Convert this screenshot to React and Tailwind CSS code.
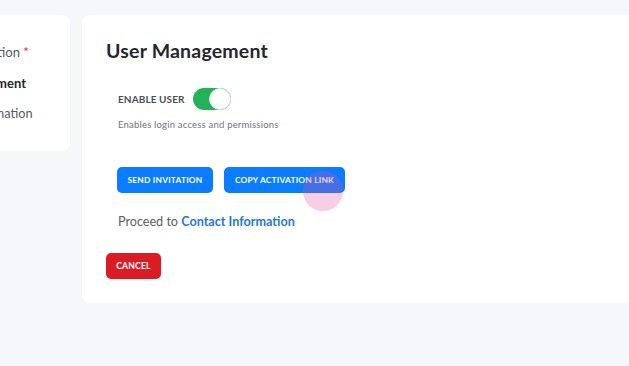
import React from "react";

export default function App() {
  const font = { fontFamily: "Lato, 'Noto Sans', sans-serif" };
  return (
    <div className="relative w-[629px] h-[366px] overflow-hidden bg-[#f6f7fb]" style={font}>
      <div className="flex items-start gap-3 pt-[15px]">
        <div className="shrink-0 ml-[-100px] w-[170px] h-[136px] bg-white rounded-lg pt-[28px] pl-[20px]">
          <div className="text-[13px] leading-[18px] text-[#55585f]">
            Basic Information <span className="text-[#e0323c]">*</span>
          </div>
          <div className="mt-[13px] text-[13px] leading-[18px] font-bold text-[#25262b]">User Management</div>
          <div className="mt-[12px] text-[12.7px] leading-[18px] text-[#55585f]">Contact Information</div>
        </div>
        <div className="shrink-0 w-[600px] h-[288px] bg-white rounded-lg pt-6 pl-6">
          <h2 className="text-[19.5px] leading-[24px] font-bold text-[#25262f] tracking-[0.2px]">User Management</h2>
          <div className="mt-[25px] ml-3 flex items-center gap-3 h-[22px]">
            <span className="w-[63px] whitespace-nowrap text-[10px] font-bold text-[#4a4d57] tracking-[0.1px]">ENABLE USER</span>
            <div className="relative w-[38px] h-[22px] rounded-full bg-[#23b159]">
              <div className="absolute right-0 top-0 w-[22px] h-[22px] rounded-full bg-white border border-[#e3e4e8]" />
            </div>
          </div>
          <p className="mt-2 ml-3 text-[9.5px] leading-[14px] text-[#6f727c] tracking-[0.2px]">Enables login access and permissions</p>
          <div className="mt-[35px] ml-[11px] flex gap-[11px]">
            <button className="w-[96px] h-[26px] rounded-[5px] bg-[#0a7cff] text-white text-[8.4px] font-bold tracking-[0.2px]">SEND INVITATION</button>
            <button className="w-[121px] h-[26px] rounded-[5px] bg-[#0a7cff] text-white text-[8.4px] font-bold tracking-[0.2px]">COPY ACTIVATION LINK</button>
          </div>
          <p className="mt-5 ml-3 text-[12.6px] leading-[18px] text-[#5a5d66]">
            Proceed to <span className="font-bold text-[#1f77d9]">Contact Information</span>
          </p>
          <button className="mt-[22px] w-[55px] h-[26px] rounded-[5px] bg-[#dc1c25] text-white text-[8.6px] font-bold tracking-[0.2px]">CANCEL</button>
        </div>
      </div>
      <div className="absolute left-[303px] top-[171px] w-[40px] h-[40px] rounded-full bg-[rgba(226,80,160,0.28)] pointer-events-none" />
    </div>
  );
}
